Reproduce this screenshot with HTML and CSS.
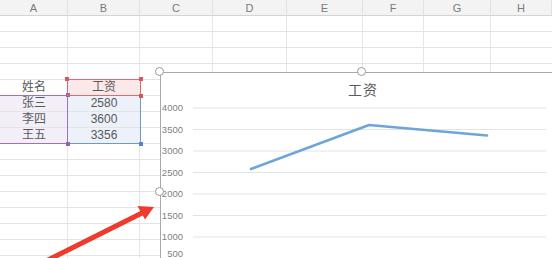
FILE: index.html
```html
<!DOCTYPE html>
<html lang="zh">

<head>
  <meta charset="UTF-8">
  <title>工资</title>
  <link rel="stylesheet" href="styles.css">
</head>

<body>
  <div class="sheet">
    <div class="head">A</div><div class="head">B</div><div class="head">C</div><div class="head">D</div>
    <div class="head">E</div><div class="head">F</div><div class="head">G</div><div class="head">H</div>

    <div class="row"></div>
    <div class="row"></div>
    <div class="row"></div>
    <div class="row"></div>

    <div class="row">
      <div class="cell">姓名</div><div class="cell red">工资</div>
      <div class="cell"></div><div class="cell"></div><div class="cell"></div><div class="cell"></div><div class="cell"></div><div class="cell"></div>
    </div>
    <div class="row">
      <div class="cell purple">张三</div><div class="cell blue">2580</div>
      <div class="cell"></div><div class="cell"></div><div class="cell"></div><div class="cell"></div><div class="cell"></div><div class="cell"></div>
    </div>
    <div class="row">
      <div class="cell purple">李四</div><div class="cell blue">3600</div>
      <div class="cell"></div><div class="cell"></div><div class="cell"></div><div class="cell"></div><div class="cell"></div><div class="cell"></div>
    </div>
    <div class="row">
      <div class="cell purple">王五</div><div class="cell blue">3356</div>
      <div class="cell"></div><div class="cell"></div><div class="cell"></div><div class="cell"></div><div class="cell"></div><div class="cell"></div>
    </div>

    <div class="row"></div>
    <div class="row"></div>
    <div class="row"></div>
    <div class="row"></div>
    <div class="row"></div>
    <div class="row"></div>
    <div class="row"></div>
    <div class="row"></div>

    <!-- range outlines -->
    <div class="range range-blue">
      <i class="knob k-br"></i>
    </div>
    <div class="range range-purple">
      <i class="knob k-tr"></i><i class="knob k-br"></i>
    </div>
    <div class="range range-red">
      <i class="knob k-tl"></i><i class="knob k-tr"></i><i class="knob k-br"></i>
    </div>

    <!-- chart object -->
    <div class="chart">
      <div class="chart-title">工资</div>
      <svg class="plot" width="404" height="240" viewBox="0 0 404 240">
        <g stroke="#e3e3e3" stroke-width="1">
          <line x1="32" y1="35" x2="385" y2="35" />
          <line x1="32" y1="56.5" x2="385" y2="56.5" />
          <line x1="32" y1="78" x2="385" y2="78" />
          <line x1="32" y1="99.5" x2="385" y2="99.5" />
          <line x1="32" y1="121" x2="385" y2="121" />
          <line x1="32" y1="142.5" x2="385" y2="142.5" />
          <line x1="32" y1="164" x2="385" y2="164" />
          <line x1="32" y1="185.5" x2="385" y2="185.5" />
        </g>
        <g class="ylab" text-anchor="end">
          <text x="22" y="38">4000</text>
          <text x="22" y="59.5">3500</text>
          <text x="22" y="81">3000</text>
          <text x="22" y="102.5">2500</text>
          <text x="22" y="124">2000</text>
          <text x="22" y="145.5">1500</text>
          <text x="22" y="167">1000</text>
          <text x="22" y="184">500</text>
        </g>
        <polyline points="90,96 208,52 326,62.5" fill="none" stroke="#6fa4d8" stroke-width="2.6" stroke-linejoin="round" stroke-linecap="round" />
      </svg>
      <i class="handle h-tl"></i>
      <i class="handle h-tm"></i>
      <i class="handle h-ml"></i>
    </div>

    <!-- annotation arrow -->
    <svg class="arrow" width="552" height="258" viewBox="0 0 552 258">
      <line x1="40" y1="264" x2="142" y2="213" stroke="#ee3b2e" stroke-width="5" />
      <polygon points="154,207 145,219.5 137.5,206" fill="#ee3b2e" />
    </svg>
  </div>
</body>

</html>
```

FILE: styles.css
```css
body {
  margin: 0;
  width: 552px;
  height: 258px;
  overflow: hidden;
  background: #fff;
  font-family: "Liberation Sans", "Noto Sans CJK SC", sans-serif;
}

.sheet {
  position: relative;
  display: grid;
  grid-template-columns: 68px 72px 73px 74px 76px 61px 67px 61px;
  grid-auto-rows: 16px;
}

.head {
  background: #f3f3f3;
  border-right: 1px solid #e2e2e2;
  border-bottom: 1px solid #d4d4d4;
  color: #7a7a7a;
  font-size: 11px;
  line-height: 16px;
  text-align: center;
}

.row {
  grid-column: 1 / -1;
  display: grid;
  grid-template-columns: subgrid;
  border-bottom: 1px solid #e4e4e4;
  box-sizing: border-box;
  background-image: linear-gradient(#e6e6e6, #e6e6e6), linear-gradient(#e6e6e6, #e6e6e6),
    linear-gradient(#e6e6e6, #e6e6e6), linear-gradient(#e6e6e6, #e6e6e6),
    linear-gradient(#e6e6e6, #e6e6e6), linear-gradient(#e6e6e6, #e6e6e6),
    linear-gradient(#e6e6e6, #e6e6e6);
  background-size: 1px 100%;
  background-repeat: no-repeat;
  background-position: 67px 0, 139px 0, 212px 0, 286px 0, 362px 0, 423px 0, 490px 0;
}

.cell {
  color: #595959;
  font-size: 12px;
  line-height: 15px;
  text-align: center;
}

.red {
  background: #fbe9e9;
}

.purple {
  background: #f3eff9;
}

.blue {
  background: #ecf1fa;
}

.range {
  position: absolute;
  box-sizing: border-box;
}

.range-red {
  left: 67px;
  top: 79px;
  width: 74px;
  height: 17px;
  border: 1.5px solid #dc6b70;
}

.range-purple {
  left: -2px;
  top: 95px;
  width: 70px;
  height: 49px;
  border: 1.5px solid #9b72c4;
}

.range-blue {
  left: 67px;
  top: 95px;
  width: 74px;
  height: 49px;
  border: 1.5px solid #6d98d8;
  border-top: none;
}

.knob {
  position: absolute;
  width: 4px;
  height: 4px;
}

.range-red .knob {
  background: #d9555c;
}

.range-purple .knob {
  background: #9460c2;
}

.range-blue .knob {
  background: #4f86d6;
}

.k-tl { left: -3px; top: -3px; }
.k-tr { right: -3px; top: -3px; }
.k-bl { left: -3px; bottom: -3px; }
.k-br { right: -3px; bottom: -3px; }

.chart {
  position: absolute;
  left: 160px;
  top: 72px;
  width: 404px;
  height: 240px;
  background: #fff;
  border-top: 1.5px solid #a9a9a9;
  border-left: 1.5px solid #a9a9a9;
}

.chart-title {
  position: absolute;
  left: 0;
  right: 0;
  top: 6px;
  text-align: center;
  color: #595959;
  font-size: 14px;
  letter-spacing: 1px;
}

.plot {
  display: block;
}

.ylab text {
  font-family: "Liberation Sans", sans-serif;
  font-size: 9.5px;
  fill: #7f7f7f;
}

.handle {
  position: absolute;
  width: 7px;
  height: 7px;
  border: 1.5px solid #9a9a9a;
  border-radius: 50%;
  background: #fff;
}

.h-tl { left: -6px; top: -6px; }
.h-tm { left: 196px; top: -6px; }
.h-ml { left: -6px; top: 114px; }

.arrow {
  position: absolute;
  left: 0;
  top: 0;
  pointer-events: none;
}
```
